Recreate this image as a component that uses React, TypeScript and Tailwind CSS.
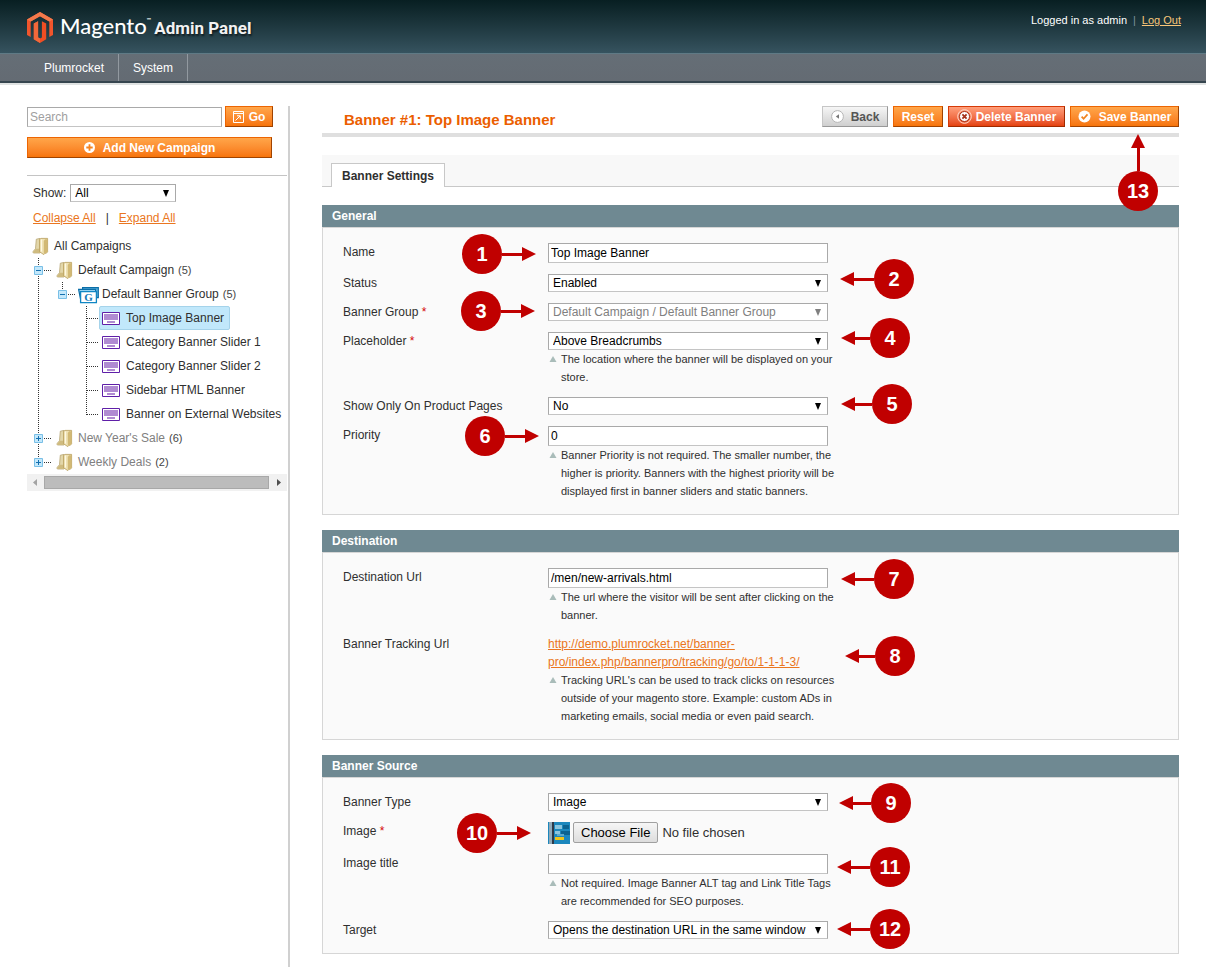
import { useState } from "react"
import type { ReactNode } from "react"
import clsx from "clsx"

const INPUT = "block h-5 w-[280px] border border-[#a9a9a9] border-b-[#c4c4c4] bg-white px-[2px] text-xs text-black outline-none"
const ORANGE = "border-t-[#ed6502] border-l-[#ed6502] border-r-[#a04300] border-b-[#a04300] bg-linear-to-b from-[#ffa649] to-[#f77408] text-white"
const RED = "border-t-[#d63a08] border-l-[#d63a08] border-r-[#a02a00] border-b-[#a02a00] bg-linear-to-b from-[#ff9f7a] to-[#e4410a] text-white"
const GRAY = "border-t-[#c6c6c6] border-l-[#c6c6c6] border-r-[#989898] border-b-[#989898] bg-linear-to-b from-[#f6f6f6] to-[#cfcfcf] text-[#555555]"

/* Icons */

function MagentoLogo() {
  return (
    <svg width="26" height="31" viewBox="0 0 26 31">
      <path d="M13 0 26 7.5V23L22.3 25.1V9.6L13 4.3 3.7 9.6V25.1L0 23V7.5Z" fill="#f2552c" />
      <path d="M13 0 26 7.5 22.3 9.6 13 4.3 3.7 9.6 0 7.5Z" fill="#f47a4c" />
      <path d="M6.8 11.6 11.1 9.2V25.4L13 26.5 14.9 25.4V9.2L19.2 11.6V27.2L13 31 6.8 27.2Z" fill="#f04e23" />
      <path d="M11.1 9.2V25.4L13 26.5V31L6.8 27.2V11.6Z" fill="#f3683a" />
    </svg>
  )
}

function GoIcon() {
  return (
    <svg width="11" height="12" viewBox="0 0 11 12" fill="none" stroke="#fff">
      <path d="M.5 .5h10v11H.5zM.5 2.5h10" />
      <path d="M2.5 9.5 7 5M4 4.8h3.3v3.4" />
    </svg>
  )
}

function PlusIcon() {
  return (
    <svg width="11" height="11" viewBox="0 0 11 11">
      <circle cx="5.5" cy="5.5" r="5.5" fill="#fff" />
      <path d="M5.5 2.3v6.4M2.3 5.5h6.4" stroke="#f68420" strokeWidth="1.8" />
    </svg>
  )
}

function BackIcon() {
  return (
    <svg width="13" height="13" viewBox="0 0 13 13">
      <circle cx="6.5" cy="6.5" r="5.9" fill="#fff" stroke="#b5b5b5" />
      <path d="M8 4.2v4.6L4.8 6.5z" fill="#777" />
    </svg>
  )
}

function DeleteIcon() {
  return (
    <svg width="15" height="15" viewBox="0 0 15 15" fill="none">
      <circle cx="7.5" cy="7.5" r="6.8" stroke="#ffd9cc" />
      <circle cx="7.5" cy="7.5" r="5" fill="#fff" stroke="#a5321a" />
      <path d="m5.4 5.4 4.2 4.2m0-4.2L5.4 9.6" stroke="#a5321a" strokeWidth="1.8" />
    </svg>
  )
}

function SaveIcon() {
  return (
    <svg width="13" height="13" viewBox="0 0 13 13" fill="none">
      <circle cx="6.5" cy="6.5" r="6" fill="#fff" />
      <path d="m3.6 6.6 2 2.1 3.9-4.3" stroke="#f08422" strokeWidth="1.7" />
    </svg>
  )
}

function FolderIcon() {
  return (
    <svg width="24" height="24" viewBox="0 0 24 24">
      <path d="M6.3 5.2 10 4.4V19H3.6c-.8 0-.8-1.6.1-2.3l1.8-1.9z" fill="#e3d7aa" stroke="#b7a674" strokeWidth=".8" />
      <path d="M3.4 17.4 6 14.8h4V19H3.6z" fill="#cfbb7f" />
      <path d="M9.6 5.4 11 4.4h6.6v13.4l-1.2 1.4H15l-1.2 1.4-4.2-2.8z" fill="#efe2b4" stroke="#b69c58" strokeWidth=".8" />
      <path d="M13.8 7 15 5.2h2.4v12.6L16.2 19h-1.4l-1 1.2z" fill="#d2b974" />
      <path d="M11.4 5.5v12" stroke="#fffbe8" />
    </svg>
  )
}

function GroupIcon() {
  return (
    <svg width="24" height="24" viewBox="0 0 24 24">
      <path d="M4.6 5.6h15.7v10H4.6z" fill="#5eb5e0" stroke="#0b6ea8" strokeWidth="1.2" />
      <path d="M.6 7.4h17v10H2.6z" fill="#8fd0f0" stroke="#0b6ea8" strokeWidth="1.2" />
      <path d="M2.6 9.6h15.8v11H2.6z" fill="#fff" stroke="#0f86c4" strokeWidth="1.3" />
      <text x="10.5" y="19" textAnchor="middle" fontFamily="Liberation Serif, serif" fontWeight="700" fontSize="11" fill="#0f78b8">G</text>
    </svg>
  )
}

function BannerIcon() {
  return (
    <svg width="24" height="24" viewBox="0 0 24 24">
      <path d="M.5 6.5h17v12H.5z" fill="#fff" stroke="#5f1fa8" />
      <path d="M2 8h14v6H2zM5 15h8v2H5z" fill="#b08bd2" />
    </svg>
  )
}

// One 24px column of the tree's dotted guide lines
type Guide = "line" | "tee" | "end" | "open" | "openEnd" | "closed" | "closedEnd" | "none"

function GuideCell({ kind }: { kind: Guide }) {
  const full = kind === "line" || kind === "tee" || kind === "open" || kind === "closed"
  const box = kind === "open" || kind === "openEnd" || kind === "closed" || kind === "closedEnd"
  return (
    <svg width="24" height="24" viewBox="0 0 24 24" className="shrink-0" fill="none">
      {kind !== "none" && (
        <path d={full ? "M8.5 0v24" : "M8.5 0v13"} stroke="#333" strokeDasharray="1 1" />
      )}
      {kind !== "none" && kind !== "line" && (
        <path d={box ? "M14 12.5h7" : "M9 12.5h12"} stroke="#333" strokeDasharray="1 1" />
      )}
      {box && <path d="M4.5 8.5h8v8h-8z" fill="#c4e8fb" stroke="#79bfe6" />}
      {box && <path d="M6 12.5h5" stroke="#1470b0" />}
      {(kind === "closed" || kind === "closedEnd") && <path d="M8.5 10v5" stroke="#1470b0" />}
    </svg>
  )
}

/* Small building blocks */

function Button({ tone, icon, className, children }: { tone: string; icon?: ReactNode; className?: string; children: ReactNode }) {
  return (
    <button type="button" className={clsx("flex h-[21px] items-center justify-center border text-xs font-bold whitespace-nowrap", tone, className)}>
      {icon}
      <span className="leading-4">{children}</span>
    </button>
  )
}

function Select({ id, options, disabled, className }: { id: string; options: string[]; disabled?: boolean; className: string }) {
  return (
    <div className={clsx("relative h-[18px]", className)}>
      <select
        id={id}
        disabled={disabled}
        className="block h-[18px] w-full appearance-none border border-[#a9a9a9] border-b-[#c4c4c4] bg-white pr-5 pl-1 text-xs leading-4 text-black outline-none disabled:text-[#808080]"
      >
        {options.map((option) => (
          <option key={option}>{option}</option>
        ))}
      </select>
      <svg width="8" height="7" viewBox="0 0 8 7" className="pointer-events-none absolute top-[6px] right-[6px]">
        <path d="M1 0h6L4 7z" fill={disabled ? "#808080" : "#000"} />
      </svg>
    </div>
  )
}

function Callout({ n, side, className }: { n: number; side: "left" | "right" | "below"; className: string }) {
  return (
    <div
      className={clsx(
        "absolute z-10 flex items-center",
        side === "left" && "h-10 flex-row-reverse",
        side === "right" && "h-10",
        side === "below" && "w-10 flex-col",
        className
      )}
    >
      <svg
        width="14"
        height="14"
        viewBox="0 0 14 14"
        className={clsx("shrink-0", side === "left" && "rotate-180", side === "below" && "rotate-90")}
      >
        <path d="M0 7 14 0v14z" fill="#c00000" />
      </svg>
      <span className={clsx("flex-1 bg-[#c00000]", side === "below" ? "w-[3px]" : "h-[3px]")} />
      <span className="flex size-10 shrink-0 items-center justify-center rounded-full bg-[#c00000] text-xl font-bold text-white">
        {n}
      </span>
    </div>
  )
}

function Panel({ title, children }: { title: string; children: ReactNode }) {
  return (
    <section className="mb-[15px]">
      <h2 className="h-[22px] bg-[#6f8992] pl-[10px] text-xs leading-[22px] font-bold text-white">{title}</h2>
      <div className="flex flex-col gap-[11px] border border-[#d6d6d6] bg-[#fafafa] px-5 pt-[15px] pb-[14px]">{children}</div>
    </section>
  )
}

type FieldProps = {
  label: string
  htmlFor?: string
  required?: boolean
  hint?: string
  callout?: ReactNode
  children: ReactNode
}

function Field({ label, htmlFor, required, hint, callout, children }: FieldProps) {
  return (
    <div className="relative grid grid-cols-[205px_293px]">
      <label htmlFor={htmlFor} className="text-xs leading-[18px]">
        {label}
        {required && <span className="text-[#d40707]"> *</span>}
      </label>
      <div>
        {children}
        {hint && (
          <p className="flex text-[11px] leading-[18px]">
            <svg width="13" height="18" viewBox="0 0 13 18" className="shrink-0">
              <path d="M5 6 8.5 12h-7z" fill="#a9bcb9" />
            </svg>
            {hint}
          </p>
        )}
      </div>
      {callout}
    </div>
  )
}

/* Sidebar */

type Node = { label: string; count?: number; icon: "folder" | "group" | "banner"; guides: Guide[]; selected?: boolean; muted?: boolean }

const TREE: Node[] = [
  { label: "All Campaigns", icon: "folder", guides: [] },
  { label: "Default Campaign", count: 5, icon: "folder", guides: ["open"] },
  { label: "Default Banner Group", count: 5, icon: "group", guides: ["line", "openEnd"] },
  { label: "Top Image Banner", icon: "banner", guides: ["line", "none", "tee"], selected: true },
  { label: "Category Banner Slider 1", icon: "banner", guides: ["line", "none", "tee"] },
  { label: "Category Banner Slider 2", icon: "banner", guides: ["line", "none", "tee"] },
  { label: "Sidebar HTML Banner", icon: "banner", guides: ["line", "none", "tee"] },
  { label: "Banner on External Websites", icon: "banner", guides: ["line", "none", "end"] },
  { label: "New Year's Sale", count: 6, icon: "folder", guides: ["closed"], muted: true },
  { label: "Weekly Deals", count: 2, icon: "folder", guides: ["closedEnd"], muted: true },
]

function TreeRow({ node }: { node: Node }) {
  return (
    <li className="flex h-6">
      {node.guides.map((kind, i) => (
        <GuideCell key={i} kind={kind} />
      ))}
      <a
        href="#"
        className={clsx(
          "flex items-center text-xs whitespace-nowrap",
          node.selected && "-ml-[3px] rounded-xs border border-[#a5d3ea] bg-[#c1e8fb] pr-[5px] pl-[2px]",
          node.muted && "text-[#808080]"
        )}
      >
        {node.icon === "folder" && <FolderIcon />}
        {node.icon === "group" && <GroupIcon />}
        {node.icon === "banner" && <BannerIcon />}
        {node.label}
        {node.count !== undefined && <span className="ml-1 text-[11px] text-[#444]">({node.count})</span>}
      </a>
    </li>
  )
}

function Sidebar() {
  return (
    <aside className="w-[263px] shrink-0 border-r-2 border-[#d0d0d0] pr-[1px]">
      <form className="flex items-center gap-[3px]">
        <input
          type="text"
          aria-label="Search"
          placeholder="Search"
          className="h-5 w-[195px] border border-[#a9a9a9] border-b-[#c4c4c4] px-[2px] text-xs outline-none placeholder:text-[#a0a0a0]"
        />
        <Button tone={ORANGE} icon={<GoIcon />} className="w-12 gap-[5px]">Go</Button>
      </form>
      <Button tone={ORANGE} icon={<PlusIcon />} className="mt-[10px] w-[245px] gap-2">Add New Campaign</Button>
      <div className="mt-[17px] border-t border-[#c4c4c4] pt-2">
        <div className="flex items-center gap-1 pl-[6px]">
          <label htmlFor="show" className="text-xs">Show:</label>
          <Select id="show" options={["All", "Enabled", "Disabled"]} className="w-[106px]" />
        </div>
        <div className="mt-2 flex gap-[10px] pl-[6px] text-xs leading-4">
          <a href="#" className="text-[#ea7620] underline">Collapse All</a>
          <span>|</span>
          <a href="#" className="text-[#ea7620] underline">Expand All</a>
        </div>
      </div>
      <ul className="mt-2 pl-[3px]">
        {TREE.map((node) => (
          <TreeRow key={node.label} node={node} />
        ))}
      </ul>
      <div className="flex h-[17px] items-center justify-between bg-[#f1f1f1]">
        <svg width="17" height="17" viewBox="0 0 17 17">
          <path d="M10 5v7L6 8.5z" fill="#a3a3a3" />
        </svg>
        <div className="mr-px h-[13px] flex-1 border border-[#a8a8a8] bg-[#bcbcbc]" />
        <svg width="17" height="17" viewBox="0 0 17 17">
          <path d="M7 5v7l4-3.5z" fill="#505050" />
        </svg>
      </div>
    </aside>
  )
}

/* Page */

function Header() {
  return (
    <header>
      <div className="flex h-[53px] items-start justify-between bg-linear-to-b from-[#081f22] to-[#36535f] pr-[25px] pl-[27px]">
        <div className="flex items-center gap-[7px] pt-[10px]">
          <MagentoLogo />
          <div className="flex items-baseline gap-[3px] text-white">
            <span className="flex font-['Lato',sans-serif] text-[22px] leading-[31px] font-medium">
              Magento<span className="text-[6px] leading-[20px]">™</span>
            </span>
            <span className="font-['Liberation_Sans_Narrow','Roboto',sans-serif] text-[17px] leading-[31px] font-bold text-[#f2f2f2] text-shadow-[1px_2px_2px_rgb(0_0_0/0.6)]">
              Admin Panel
            </span>
          </div>
        </div>
        <p className="flex gap-[6px] pt-[13px] text-[11px] leading-[14px] text-white">
          Logged in as admin
          <span className="text-[#7c949c]">|</span>
          <a href="#" className="text-[#f8c679] underline">Log Out</a>
        </p>
      </div>
      <nav className="flex h-[30px] border-t border-b-2 border-t-[#5f7a85] border-b-[#36454f] bg-linear-to-b from-[#656e76] to-[#646b73] pl-[30px] text-xs text-white">
        <a href="#" className="flex items-center border-r border-[#9299a0] px-[14px]">Plumrocket</a>
        <a href="#" className="flex items-center border-r border-[#9299a0] px-[14px]">System</a>
      </nav>
      <div className="h-[2px] bg-[#dfe2e2]" />
    </header>
  )
}

function Thumbnail() {
  return (
    <svg width="22" height="22" viewBox="0 0 22 22" className="shrink-0">
      <path d="M0 0h22v22H0z" fill="#1b87bd" />
      <path d="M1 0h3v22H1z" fill="#8fa9b8" />
      <path d="M4 0h2v22H4z" fill="#2f3a48" />
      <path d="M7 3h7v4H7zM7 9h5v3H7z" fill="#8cc5dd" />
      <path d="M15 3h6v4h-6zM13 9h9v4h-9z" fill="#0c6391" />
      <path d="M9 12h7v2H9z" fill="#5aa9cc" />
      <path d="M7 15h9v3H7z" fill="#f0c419" />
    </svg>
  )
}

export default function App() {
  const [name, setName] = useState("Top Image Banner")
  const [priority, setPriority] = useState("0")
  const [url, setUrl] = useState("/men/new-arrivals.html")
  const [title, setTitle] = useState("")

  return (
    <div className="min-h-screen bg-white font-['Liberation_Sans',Arial,sans-serif] text-[#2f2f2f]">
      <Header />
      <div className="flex pt-[21px] pr-[27px] pl-[27px]">
        <Sidebar />
        <main className="min-w-0 flex-1 pl-8">
          <div className="flex items-start justify-between border-b-4 border-[#dfdfdf] pb-[3px] pl-[22px]">
            <h1 className="pt-1 text-[15px] leading-[20px] font-bold text-[#eb5e00]">Banner #1: Top Image Banner</h1>
            <div className="flex gap-[5px]">
              <Button tone={GRAY} icon={<BackIcon />} className="w-[66px] gap-[7px]">Back</Button>
              <Button tone={ORANGE} className="w-[50px]">Reset</Button>
              <Button tone={RED} icon={<DeleteIcon />} className="w-[117px] gap-1">Delete Banner</Button>
              <div className="relative">
                <Button tone={ORANGE} icon={<SaveIcon />} className="w-[109px] gap-2">Save Banner</Button>
                <Callout n={13} side="below" className="top-7 left-12 h-[77px]" />
              </div>
            </div>
          </div>

          <div className="mt-[18px] flex h-8 items-end border-b border-[#c8c8c8] bg-[#f8f8f8] pl-[9px]">
            <button type="button" className="-mb-px h-6 border border-b-0 border-[#c8c8c8] bg-white px-[10px] text-xs font-bold">
              Banner Settings
            </button>
          </div>

          <form className="mt-[18px]">
            <Panel title="General">
              <Field label="Name" htmlFor="name" callout={<Callout n={1} side="left" className="-top-[9px] left-[119px] w-[74px]" />}>
                <input id="name" type="text" value={name} onChange={(e) => setName(e.target.value)} className={INPUT} />
              </Field>
              <Field label="Status" htmlFor="status" callout={<Callout n={2} side="right" className="-top-[15px] left-[497px] w-[74px]" />}>
                <Select id="status" options={["Enabled", "Disabled"]} className="w-[280px]" />
              </Field>
              <Field label="Banner Group" htmlFor="group" required callout={<Callout n={3} side="left" className="-top-[12px] left-[118px] w-[74px]" />}>
                <Select id="group" options={["Default Campaign / Default Banner Group"]} disabled className="w-[280px]" />
              </Field>
              <Field
                label="Placeholder"
                htmlFor="placeholder"
                required
                hint="The location where the banner will be displayed on your store."
                callout={<Callout n={4} side="right" className="-top-[14px] left-[498px] w-[69px]" />}
              >
                <Select id="placeholder" options={["Above Breadcrumbs"]} className="w-[280px]" />
              </Field>
              <Field label="Show Only On Product Pages" htmlFor="product-only" callout={<Callout n={5} side="right" className="-top-[13px] left-[498px] w-[71px]" />}>
                <Select id="product-only" options={["No", "Yes"]} className="w-[280px]" />
              </Field>
              <Field
                label="Priority"
                htmlFor="priority"
                hint="Banner Priority is not required. The smaller number, the higher is priority. Banners with the highest priority will be displayed first in banner sliders and static banners."
                callout={<Callout n={6} side="left" className="-top-[10px] left-[122px] w-[74px]" />}
              >
                <input id="priority" type="text" value={priority} onChange={(e) => setPriority(e.target.value)} className={INPUT} />
              </Field>
            </Panel>

            <Panel title="Destination">
              <Field
                label="Destination Url"
                htmlFor="url"
                hint="The url where the visitor will be sent after clicking on the banner."
                callout={<Callout n={7} side="right" className="-top-[9px] left-[498px] w-[73px]" />}
              >
                <input id="url" type="text" value={url} onChange={(e) => setUrl(e.target.value)} className={INPUT} />
              </Field>
              <Field
                label="Banner Tracking Url"
                hint="Tracking URL's can be used to track clicks on resources outside of your magento store. Example: custom ADs in marketing emails, social media or even paid search."
                callout={<Callout n={8} side="right" className="top-px left-[502px] w-[70px]" />}
              >
                <a href="#" className="block w-[280px] text-xs leading-[18px] text-[#ea7620] underline">
                  http://demo.plumrocket.net/banner-pro/index.php/bannerpro/tracking/go/to/1-1-1-3/
                </a>
              </Field>
            </Panel>

            <Panel title="Banner Source">
              <Field label="Banner Type" htmlFor="type" callout={<Callout n={9} side="right" className="-top-[10px] left-[496px] w-[72px]" />}>
                <Select id="type" options={["Image", "HTML"]} className="w-[280px]" />
              </Field>
              <Field label="Image" htmlFor="image" required callout={<Callout n={10} side="left" className="-top-[9px] left-[114px] w-[74px]" />}>
                <div className="flex h-[21px] items-center gap-[3px]">
                  <Thumbnail />
                  <input
                    id="image"
                    type="file"
                    className="h-[21px] w-60 text-[13px] leading-[19px] file:mr-1 file:h-[21px] file:rounded-xs file:border file:border-solid file:border-[#a0a0a0] file:bg-linear-to-b file:from-[#f6f6f6] file:to-[#dddddd] file:px-[7px] file:text-[13px] file:text-black"
                  />
                </div>
              </Field>
              <Field
                label="Image title"
                htmlFor="title"
                hint="Not required. Image Banner ALT tag and Link Title Tags are recommended for SEO purposes."
                callout={<Callout n={11} side="right" className="-top-[7px] left-[494px] w-[73px]" />}
              >
                <input id="title" type="text" value={title} onChange={(e) => setTitle(e.target.value)} className={INPUT} />
              </Field>
              <Field label="Target" htmlFor="target" callout={<Callout n={12} side="right" className="-top-[12px] left-[494px] w-[73px]" />}>
                <Select id="target" options={["Opens the destination URL in the same window", "Opens the destination URL in a new window"]} className="w-[280px]" />
              </Field>
            </Panel>
          </form>
        </main>
      </div>
    </div>
  )
}
